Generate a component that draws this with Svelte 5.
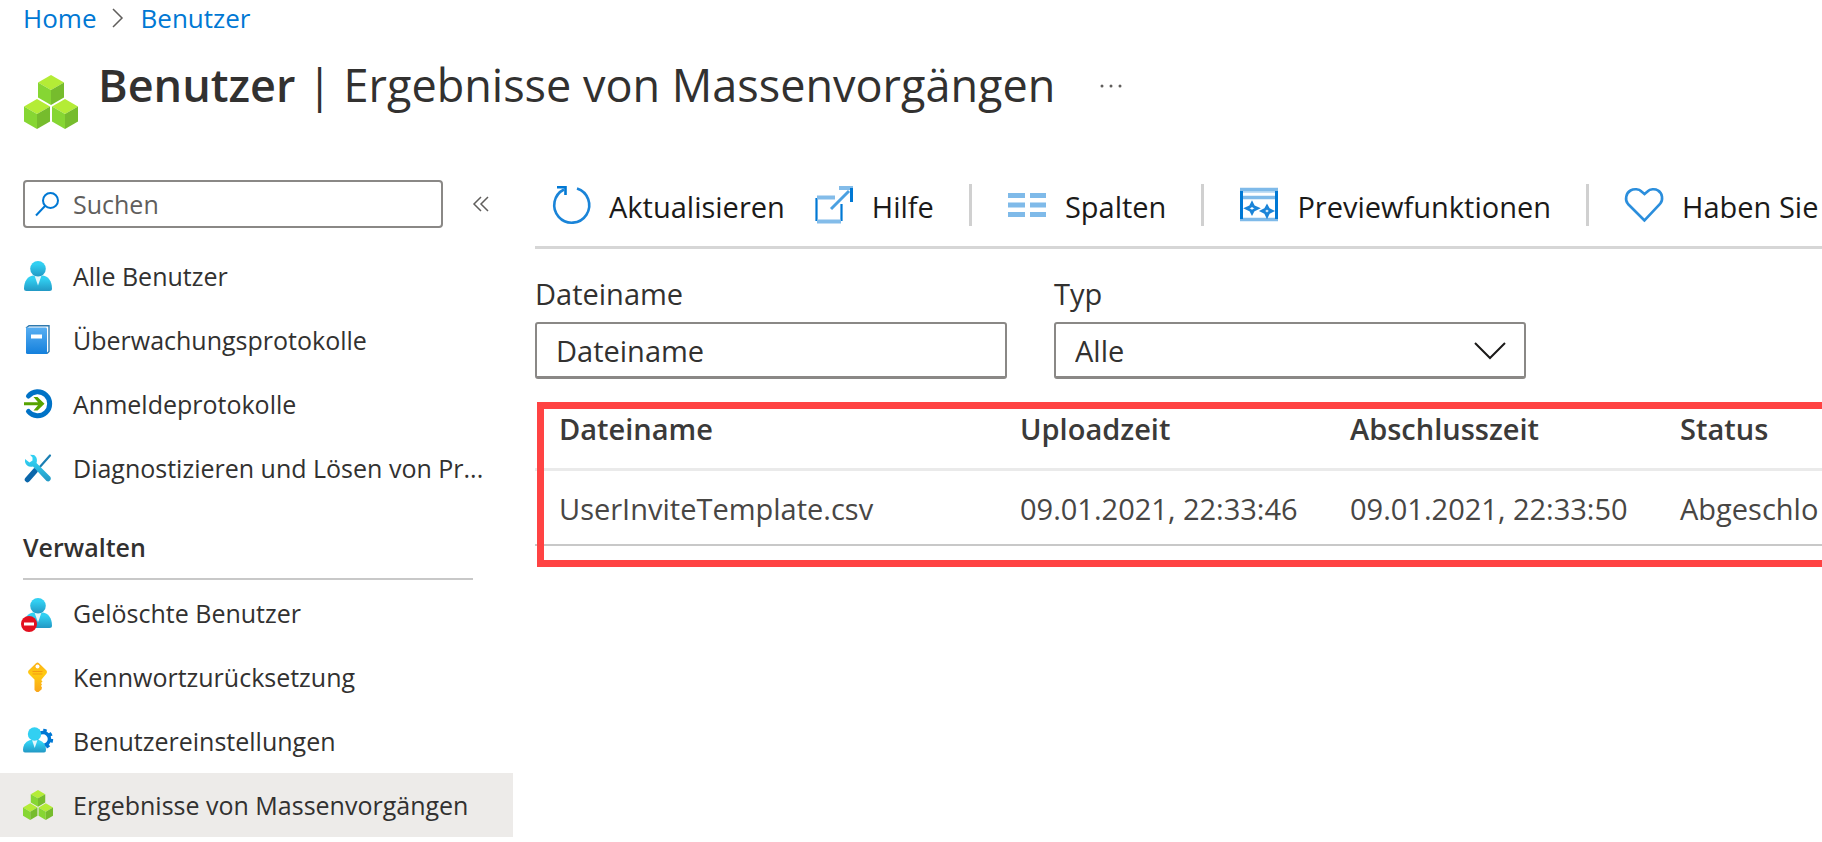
<script lang="ts">
	type NavItem = { label: string; icon: string; active?: boolean };

	const general: NavItem[] = [
		{ label: 'Alle Benutzer', icon: 'user' },
		{ label: 'Überwachungsprotokolle', icon: 'book' },
		{ label: 'Anmeldeprotokolle', icon: 'signin' },
		{ label: 'Diagnostizieren und Lösen von Pr...', icon: 'tools' }
	];

	const manage: NavItem[] = [
		{ label: 'Gelöschte Benutzer', icon: 'userDeleted' },
		{ label: 'Kennwortzurücksetzung', icon: 'key' },
		{ label: 'Benutzereinstellungen', icon: 'userSettings' },
		{ label: 'Ergebnisse von Massenvorgängen', icon: 'cubes', active: true }
	];

	const commands = [
		{ label: 'Aktualisieren', icon: 'refresh', divider: false },
		{ label: 'Hilfe', icon: 'external', divider: true },
		{ label: 'Spalten', icon: 'columns', divider: true },
		{ label: 'Previewfunktionen', icon: 'preview', divider: true },
		{ label: 'Haben Sie', icon: 'heart', divider: false }
	];

	const rows = [
		{
			file: 'UserInviteTemplate.csv',
			uploaded: '09.01.2021, 22:33:46',
			finished: '09.01.2021, 22:33:50',
			status: 'Abgeschlo'
		}
	];

	let search = $state('');
	let fileName = $state('');
	let type = $state('Alle');
</script>

{#snippet cube(x: number, y: number)}
	<g transform="translate({x} {y})">
		<path d="M13 0 26 7.5 13 15 0 7.5Z" fill="#b4ec36" />
		<path d="M0 7.5 13 15V30L0 22.5Z" fill="#86d633" />
		<path d="M26 7.5 13 15V30L26 22.5Z" fill="#76bc2d" />
	</g>
{/snippet}

{#snippet cubes()}
	<svg viewBox="0 0 54 54" aria-hidden="true">
		{@render cube(14, 0)}
		{@render cube(0, 24)}
		{@render cube(28, 24)}
	</svg>
{/snippet}

{#snippet person()}
	<path d="M1 27.500C1 20 5 15 10 14.500H20C25 15 29 20 29 27.500Q29 30 26.500 30H3.500Q1 30 1 27.500Z" fill="url(#person)" />
	<path d="M11.500 14.500H18.500L15 24.500Z" fill="#e3f7fc" />
	<circle cx="15" cy="7.800" r="7.800" fill="url(#person)" />
{/snippet}

{#snippet navIcon(name: string)}
	{#if name === 'cubes'}
		{@render cubes()}
	{:else}
		<svg viewBox="0 0 30 30" aria-hidden="true">
			{#if name === 'user'}
				{@render person()}
			{:else if name === 'book'}
				<path d="M3 3 6 .8H26V26.500L24 28.500" fill="#fff" stroke="#2f79ae" stroke-width="1.400" />
				<path d="M3 2.600H22.500Q24 2.600 24 4V29H4.500Q3 29 3 27.500Z" fill="url(#book)" />
				<rect x="8" y="9.500" width="11" height="4" fill="#fff" />
			{:else if name === 'signin'}
				<path d="M5.500 7A12 12 0 1 1 5.500 22.500" fill="none" stroke="#0072c6" stroke-width="5" stroke-linecap="round" />
				<path d="M1 13.300H15L10.500 8H14.500L21.500 14.800 14.500 21.500H10.500L15 16.300H1Z" fill="#57a300" />
			{:else if name === 'tools'}
				<path d="M27 2.500 15.500 15.500" stroke="#1b7fb3" stroke-width="2.200" stroke-linecap="round" />
				<path d="M4.500 26.500 12 18" stroke="#0b66aa" stroke-width="5.500" stroke-linecap="round" />
				<path d="M7 1.800 11 2C14 4 14.500 7 13.500 10L27.500 24Q28.500 26 27 27.500T23.500 28L10 13.500C6 14.500 3 12.500 2 9L2 6 6.500 9.500 9.500 7.500 9.500 4.500Z" fill="url(#person)" />
			{:else if name === 'userDeleted'}
				{@render person()}
				<circle cx="6" cy="26" r="8" fill="#e3101f" />
				<rect x="1" y="24.500" width="10" height="3" fill="#fff" />
			{:else if name === 'key'}
				<path d="M13 1.200Q14.500 -.2 16 1.200L23.500 8.500Q24.500 10 23.500 11.500L18.500 17.500V18.500L19.500 19.500 18 21 19 22.500 18 24 19 25.500 18.500 27.500 15.500 30H13.500L11.500 28V17.500L5.500 11.500Q4.500 10 5.500 8.500Z" fill="url(#key)" />
				<circle cx="14.500" cy="4.500" r="2" fill="#fff" />
				<path d="M9.500 9.500H19.500M9.500 12H19.500" stroke="#f59a12" stroke-width="1.200" />
			{:else if name === 'userSettings'}
				<g transform="translate(0 1)">
					<circle cx="20" cy="12" r="6.500" fill="none" stroke="#0078d4" stroke-width="3.500" />
					<circle cx="20" cy="12" r="8.700" fill="none" stroke="#0078d4" stroke-width="3" stroke-dasharray="3.400 3.430" />
					<path d="M0 23C0 17 4 13.500 8 13H15C19 13.500 23 17 23 23Q23 25.500 21 25.500H2Q0 25.500 0 23Z" fill="url(#person)" />
					<path d="M9 13H14.500L11.700 21Z" fill="#e3f7fc" />
					<circle cx="11.500" cy="7" r="6.700" fill="#32d0f2" />
				</g>
			{/if}
		</svg>
	{/if}
{/snippet}

{#snippet commandIcon(name: string)}
	<svg viewBox="0 0 38 38" aria-hidden="true">
		{#if name === 'refresh'}
			<path d="M25 2.500A17.500 17.500 0 1 1 12 3.500" fill="none" stroke="#1a84d8" stroke-width="2.600" />
			<path d="M5 1.200H13.500V9" fill="none" stroke="#0078d4" stroke-width="2.600" />
		{:else if name === 'external'}
			<path d="M1.500 12V35M26.500 18V35" stroke="#0078d4" stroke-width="2.200" />
			<path d="M2 11.500H20M2 35.500H26" stroke="#83bce9" stroke-width="4" />
			<path d="M16 23 34 5" stroke="#4ba0e1" stroke-width="3" />
			<path d="M24 2H38" stroke="#83bce9" stroke-width="4" />
			<path d="M36.500 2V16" stroke="#0078d4" stroke-width="3" />
		{:else if name === 'columns'}
			<path d="M0 9.500H17M22 9.500H38M0 19H17M22 19H38M0 28.500H17M22 28.500H38" stroke="#7fbae9" stroke-width="5" />
		{:else if name === 'preview'}
			<path d="M2 6H36" stroke="#c3dff5" stroke-width="2" />
			<path d="M0 3.500H38M2 11.500H36M0 33.500H38" stroke="#7fbae9" stroke-width="3.500" />
			<path d="M1.500 5V33M36.500 5V33" stroke="#0078d4" stroke-width="3" />
			<path d="M12 17.500 13.500 20.500 17.500 22.300 13.500 24.200 12 27 10.500 24.200 6.500 22.300 10.500 20.500ZM27 20.500 28.500 23.200 32 25 28.500 26.800 27 30 25.500 26.800 22 25 25.500 23.200Z" fill="#fff" stroke="#1a84d8" stroke-width="2.800" />
		{:else if name === 'heart'}
			<path d="M19.500 34.500 3 18C-.5 14 1 7 5.500 4.500 9 2.500 14 3 16.500 5.500L19.500 8 22.500 5.500C25 3 30 2.500 33 4.500 37.500 7 38.500 14 35 18Z" fill="none" stroke="#2b8edc" stroke-width="2.600" />
		{/if}
	</svg>
{/snippet}

{#snippet navList(items: NavItem[])}
	<ul>
		{#each items as item}
			<li>
				<a href="#top" class="nav-item" class:active={item.active} aria-current={item.active ? 'page' : undefined}>
					<span class="nav-icon">{@render navIcon(item.icon)}</span>
					<span>{item.label}</span>
				</a>
			</li>
		{/each}
	</ul>
{/snippet}

<svg class="defs" aria-hidden="true">
	<defs>
		<linearGradient id="person" x1="0" y1="0" x2="0" y2="1">
			<stop offset="0.200" stop-color="#32d0f2" />
			<stop offset="1" stop-color="#2298c4" />
		</linearGradient>
		<linearGradient id="book" x1="0" y1="0" x2="0" y2="1">
			<stop offset="0" stop-color="#57aef2" />
			<stop offset="1" stop-color="#1480dc" />
		</linearGradient>
		<linearGradient id="key" x1="0" y1="0" x2="0" y2="1">
			<stop offset="0" stop-color="#fbb017" />
			<stop offset="0.400" stop-color="#ffcb12" />
			<stop offset="1" stop-color="#f9a51a" />
		</linearGradient>
	</defs>
</svg>

<div class="page" id="top">
	<header>
		<nav class="breadcrumb" aria-label="Breadcrumb">
			<a href="#top">Home</a>
			<svg viewBox="0 0 12 20" aria-hidden="true"><path d="M1 1 10 10 1 19" /></svg>
			<a href="#top">Benutzer</a>
		</nav>
		<div class="title">
			<span class="title-icon">{@render cubes()}</span>
			<h1><strong>Benutzer</strong> | Ergebnisse von Massenvorgängen</h1>
			<button class="more" aria-label="Mehr">
				<svg viewBox="0 0 24 4" aria-hidden="true">
					<circle cx="3" cy="2" r="1.500" /><circle cx="12" cy="2" r="1.500" /><circle cx="21" cy="2" r="1.500" />
				</svg>
			</button>
		</div>
	</header>

	<div class="body">
		<aside>
			<div class="search-row">
				<label class="search">
					<svg viewBox="0 0 24 24" aria-hidden="true">
						<circle cx="15.500" cy="8.500" r="7.500" /><path d="M10 14 1 23.500" />
					</svg>
					<input type="text" placeholder="Suchen" aria-label="Suchen" bind:value={search} />
				</label>
				<button class="collapse" aria-label="Menü einklappen">
					<svg viewBox="0 0 16 16" aria-hidden="true"><path d="M8 1 1 8 8 15M15 1 8 8 15 15" /></svg>
				</button>
			</div>
			<nav aria-label="Benutzer">
				{@render navList(general)}
				<h2>Verwalten</h2>
				{@render navList(manage)}
			</nav>
		</aside>

		<main>
			<div class="toolbar" role="toolbar">
				{#each commands as command}
					<button class="command">
						{@render commandIcon(command.icon)}
						<span>{command.label}</span>
					</button>
					{#if command.divider}
						<span class="divider"></span>
					{/if}
				{/each}
			</div>

			<div class="filters">
				<div class="field">
					<label for="file-name">Dateiname</label>
					<input id="file-name" type="text" placeholder="Dateiname" bind:value={fileName} />
				</div>
				<div class="field">
					<label for="type">Typ</label>
					<div class="select">
						<select id="type" bind:value={type}>
							<option>Alle</option>
						</select>
						<svg viewBox="0 0 32 18" aria-hidden="true"><path d="M1 1 16 16 31 1" /></svg>
					</div>
				</div>
			</div>

			<div class="results">
				<table>
					<colgroup>
						<col class="col-file" />
						<col class="col-time" />
						<col class="col-time" />
						<col />
					</colgroup>
					<thead>
						<tr>
							<th>Dateiname</th>
							<th>Uploadzeit</th>
							<th>Abschlusszeit</th>
							<th>Status</th>
						</tr>
					</thead>
					<tbody>
						{#each rows as row}
							<tr>
								<td>{row.file}</td>
								<td>{row.uploaded}</td>
								<td>{row.finished}</td>
								<td>{row.status}</td>
							</tr>
						{/each}
					</tbody>
				</table>
				<div class="highlight"></div>
			</div>
		</main>
	</div>
</div>

<style>
	:global(body) {
		background: #fff;
	}

	.page {
		--blue: #0078d4;
		--text: #323130;
		--border: #8a8886;
		overflow: hidden;
		font-family: 'Segoe UI', 'Open Sans', 'Noto Sans', sans-serif;
		font-size: 25px;
		color: var(--text);
	}

	.defs {
		position: absolute;
		width: 0;
		height: 0;
	}

	svg {
		display: block;
		flex-shrink: 0;
		overflow: visible;
	}

	a {
		color: inherit;
		text-decoration: none;
	}

	button {
		padding: 0;
		border: 0;
		background: none;
		font: inherit;
		color: inherit;
		cursor: pointer;
	}

	input,
	select {
		box-sizing: border-box;
		margin: 0;
		font: inherit;
		color: inherit;
		background: #fff;
		outline: none;
	}

	.breadcrumb {
		display: flex;
		align-items: center;
		gap: 16px;
		padding-left: 23px;
		font-size: 26px;
		line-height: 36px;
		color: var(--blue);
	}

	.breadcrumb svg {
		width: 12px;
		height: 20px;
		fill: none;
		stroke: #605e5c;
		stroke-width: 1.5;
	}

	.title {
		display: flex;
		align-items: flex-start;
		padding: 12px 0 0 24px;
	}

	.title-icon {
		width: 54px;
		margin-top: 27px;
	}

	h1 {
		margin: 0 0 0 20px;
		font-size: 45px;
		font-weight: 400;
		line-height: 74px;
		white-space: nowrap;
	}

	h1 strong {
		font-weight: 600;
	}

	.more {
		margin: 36px 0 0 44px;
	}

	.more svg {
		width: 24px;
		height: 4px;
		fill: #605e5c;
	}

	.body {
		display: flex;
	}

	aside {
		flex: 0 0 513px;
		padding-top: 51px;
	}

	.search-row {
		display: flex;
		align-items: center;
		gap: 30px;
		padding: 0 23px 16px;
	}

	.search {
		display: flex;
		align-items: center;
		gap: 14px;
		box-sizing: border-box;
		flex: 0 0 420px;
		height: 48px;
		padding: 0 10px;
		border: 2px solid var(--border);
		border-radius: 4px;
	}

	.search svg {
		width: 24px;
		height: 24px;
		fill: none;
		stroke: var(--blue);
		stroke-width: 2;
	}

	.search input {
		flex: 1;
		min-width: 0;
		padding: 0;
		border: 0;
	}

	.search input::placeholder {
		color: #605e5c;
		opacity: 1;
	}

	.collapse svg {
		width: 16px;
		height: 16px;
		fill: none;
		stroke: #605e5c;
		stroke-width: 1.5;
	}

	ul {
		margin: 0;
		padding: 0;
		list-style: none;
	}

	.nav-item {
		display: flex;
		align-items: center;
		gap: 20px;
		height: 64px;
		padding-left: 23px;
		white-space: nowrap;
	}

	.nav-item.active {
		background: #edebe9;
	}

	.nav-icon {
		flex: 0 0 30px;
	}

	h2 {
		margin: 0 40px 1px 23px;
		padding: 32px 0 16px;
		border-bottom: 2px solid #c8c8c8;
		font-size: 25px;
		font-weight: 600;
		line-height: 30px;
	}

	main {
		flex: 1;
		min-width: 0;
		padding: 34px 0 0 22px;
		font-size: 29px;
	}

	.toolbar {
		display: flex;
		align-items: center;
		height: 83px;
		padding-left: 17px;
		border-bottom: 3px solid #d6d6d6;
		color: #1b1a19;
	}

	.command {
		display: flex;
		align-items: center;
		gap: 19px;
		margin-right: 30px;
		line-height: 40px;
		white-space: nowrap;
	}

	.command svg {
		width: 38px;
		height: 38px;
	}

	.command span {
		padding-top: 4px;
	}

	.divider {
		flex: 0 0 3px;
		height: 42px;
		margin: 0 36px 0 5px;
		background: #d0d0d0;
	}

	.filters {
		display: flex;
		gap: 47px;
		padding: 25px 0 23px;
	}

	.field {
		flex: 0 1 472px;
		min-width: 0;
	}

	.field label {
		display: block;
		margin-bottom: 8px;
		line-height: 40px;
	}

	.field input,
	.field select {
		display: block;
		width: 100%;
		height: 57px;
		padding: 0 19px;
		border: 2px solid var(--border);
		border-bottom-width: 3px;
		border-radius: 3px;
	}

	.field input::placeholder {
		color: var(--text);
		opacity: 1;
	}

	.select {
		position: relative;
	}

	.select select {
		appearance: none;
	}

	.select svg {
		position: absolute;
		top: 20px;
		right: 20px;
		width: 32px;
		height: 18px;
		fill: none;
		stroke: #1b1a19;
		stroke-width: 2;
		pointer-events: none;
	}

	.results {
		position: relative;
		padding-bottom: 21px;
	}

	table {
		width: 100%;
		border-collapse: separate;
		border-spacing: 0;
		table-layout: fixed;
		line-height: 40px;
		white-space: nowrap;
	}

	.col-file {
		width: 461px;
	}

	.col-time {
		width: 330px;
	}

	th {
		padding: 7px 0 19px 24px;
		border-bottom: 3px solid #eaeaea;
		font-weight: 600;
		text-align: left;
		color: #3b3a39;
	}

	td {
		padding: 18px 0 15px 24px;
		border-bottom: 2px solid #c8c8c8;
		color: #484644;
	}

	/* frame drawn over the table, open towards the window edge */
	.highlight {
		position: absolute;
		inset: 0 0 0 2px;
		border: 7px solid #ff4343;
		border-right: 0;
		pointer-events: none;
	}
</style>
